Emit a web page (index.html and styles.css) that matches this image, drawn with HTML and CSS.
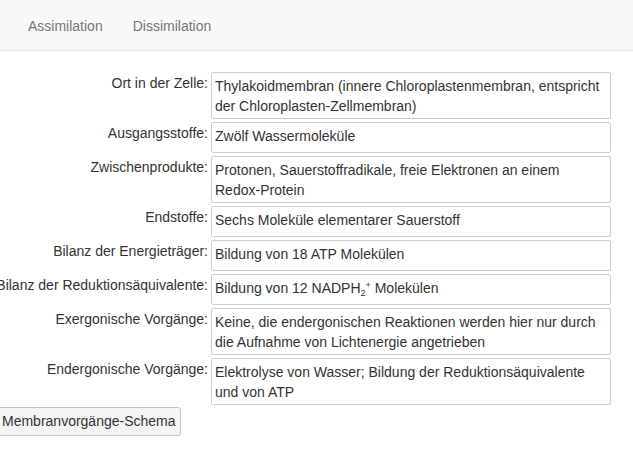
FILE: index.html
```html
<!DOCTYPE html>
<html lang="de">
<head>
<meta charset="utf-8">
<title>Lichtreaktion</title>
<link rel="stylesheet" href="styles.css">
</head>
<body>
<nav class="navbar">
  <ul class="nav">
    <li><a class="nav-link" href="#">Assimilation</a></li>
    <li><a class="nav-link" href="#">Dissimilation</a></li>
  </ul>
</nav>
<main class="content">
  <div class="facts">
    <div class="label"><span>Ort in der Zelle:</span></div>
    <div class="value">Thylakoidmembran (innere Chloroplastenmembran, entspricht der Chloroplasten-Zellmembran)</div>

    <div class="label"><span>Ausgangsstoffe:</span></div>
    <div class="value">Zwölf Wassermoleküle</div>

    <div class="label"><span>Zwischenprodukte:</span></div>
    <div class="value">Protonen, Sauerstoffradikale, freie Elektronen an einem Redox-Protein</div>

    <div class="label"><span>Endstoffe:</span></div>
    <div class="value">Sechs Moleküle elementarer Sauerstoff</div>

    <div class="label"><span>Bilanz der Energieträger:</span></div>
    <div class="value">Bildung von 18 ATP Molekülen</div>

    <div class="label"><span>Bilanz der Reduktionsäquivalente:</span></div>
    <div class="value">Bildung von 12 NADPH<sub class="sub">2</sub><sup class="sup">+</sup> Molekülen</div>

    <div class="label"><span>Exergonische Vorgänge:</span></div>
    <div class="value">Keine, die endergonischen Reaktionen werden hier nur durch die Aufnahme von Lichtenergie angetrieben</div>

    <div class="label"><span>Endergonische Vorgänge:</span></div>
    <div class="value">Elektrolyse von Wasser; Bildung der Reduktionsäquivalente und von ATP</div>
  </div>
  <button class="btn" type="button">Membranvorgänge-Schema</button>
</main>
</body>
</html>
```

FILE: styles.css
```css
html, body {
  margin: 0;
  padding: 0;
  background: #fff;
}

body {
  font-family: "Liberation Sans", Arial, sans-serif;
  font-size: 14px;
  line-height: 20px;
  color: #333;
  overflow: hidden;
}

.navbar {
  height: 50px;
  background: #f8f8f8;
  border-bottom: 1px solid #e7e7e7;
}

.nav {
  list-style: none;
  margin: 0;
  padding: 0 0 0 13px;
  display: flex;
}

.nav-link {
  display: block;
  padding: 16px 15px 14px;
  color: #777;
  text-decoration: none;
}

.content {
  padding-top: 21px;
}

.facts {
  display: grid;
  grid-template-columns: 208px 400px;
  column-gap: 3px;
  row-gap: 3px;
}

.label {
  display: flex;
  justify-content: flex-end;
  white-space: nowrap;
  padding-top: 1px;
}

.value {
  box-sizing: border-box;
  min-height: 31px;
  border: 1px solid #ccc;
  border-radius: 2px;
  padding: 3px 5px 2px 3px;
}

.sub, .sup {
  font-size: 9px;
  line-height: 0;
  position: relative;
  vertical-align: baseline;
}

.sub {
  top: 3px;
}

.sup {
  top: -5px;
}

.btn {
  display: block;
  margin: 2px 0 0 -5px;
  font-family: inherit;
  font-size: 14px;
  line-height: 19px;
  color: #333;
  background: #f4f4f4;
  border: 1px solid #c4c4c4;
  border-radius: 3px;
  padding: 4px 4px 4px 6px;
}
```
